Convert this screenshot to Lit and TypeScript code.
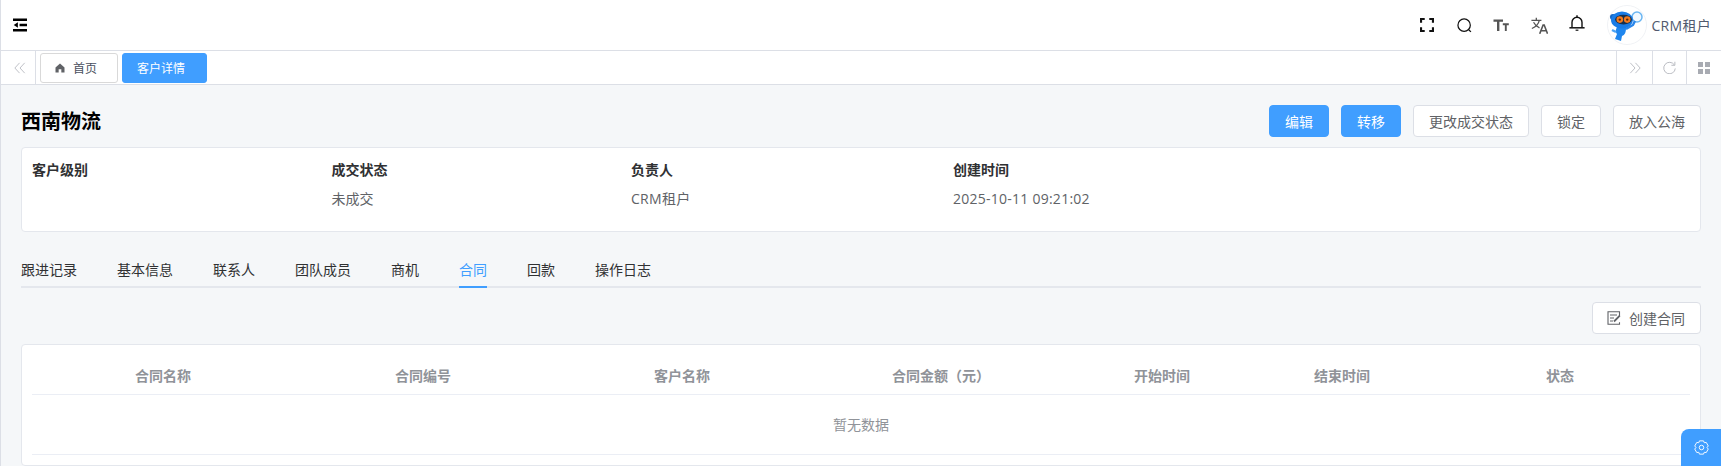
import { LitElement, css, html, svg } from 'lit';
import { customElement } from 'lit/decorators.js';

const tabs = ['跟进记录', '基本信息', '联系人', '团队成员', '商机', '合同', '回款', '操作日志'];
const columns = ['合同名称', '合同编号', '客户名称', '合同金额（元）', '开始时间', '结束时间', '状态'];

const icon = (size: number, body: unknown, box = '0 0 16 16') => html`
  <svg width=${size} height=${size} viewBox=${box} fill="none" stroke="currentColor" stroke-width="2">${body}</svg>
`;

const menuIcon = icon(14, svg`
  <path d="M0 2h16M7.5 8H16M0 14h16" stroke-width="2.6" />
  <path d="M5.6 4.8v6.4L.8 8z" fill="currentColor" stroke="none" />
`);

const fullscreenIcon = icon(14, svg`
  <path d="M1.2 5.4V1.2h4.2M10.6 1.2h4.2v4.2M14.8 10.6v4.2h-4.2M5.4 14.8H1.2v-4.2" stroke-width="2.4" />
`);

const searchIcon = icon(15, svg`
  <circle cx="7.6" cy="7.6" r="6.6" stroke-width="1.3" />
  <path d="M12.4 12.4l2.4 2.4" stroke-width="1.5" />
`);

const fontIcon = icon(16, svg`
  <path d="M.5 3.6h9.5M5.2 3.6v10.4" stroke-width="2.4" />
  <path d="M9.8 7.2h6M12.8 7.2v6.8" stroke-width="1.9" />
`);

const bellIcon = icon(16, svg`
  <path d="M3 12.6V7.2a5 5 0 0 1 10 0v5.4" stroke-width="1.4" />
  <path d="M.4 12.8h15.2" stroke-width="1.5" />
  <path d="M8 .2v2" stroke-width="1.4" />
  <path d="M6.6 15.2h2.8" stroke-width="1.2" />
`);

const translateIcon = icon(17, svg`
  <path d="M.4 3.2h9.4M5 .6v2.6M7.8 3.2c-.7 3.2-3 6-7 7.6M2.4 5c1.2 2.4 3.2 4.2 5.6 5.2" stroke-width="1.2" />
  <path d="M8.2 15.8l3.2-8.2h1l3.2 8.2M9.4 13h5.2" stroke-width="1.5" />
`);

const mascot = html`
  <svg width="40" height="40" viewBox="0 0 40 40">
    <circle cx="20" cy="20" r="19.5" fill="#fff" stroke="#f0f2f5" />
    <circle cx="30" cy="12" r="5" fill="#f2f9ff" stroke="#6bb6f2" stroke-width="1.5" />
    <path d="M19 24l7-4 2-4" stroke="#2a86ea" stroke-width="2.4" fill="none" />
    <path d="M10 22l9 1c0 4-1 7-4 8l-1 5-6-2 2-5c-2-2-1-5 0-7z" fill="#1f86ee" />
    <path d="M9 27l-4-2" stroke="#4aa3f5" stroke-width="2.4" />
    <circle cx="6" cy="12" r="3" fill="#1565c0" />
    <ellipse cx="15" cy="15" rx="11" ry="8.6" fill="#1a7ce6" />
    <ellipse cx="16.5" cy="14.6" rx="8.4" ry="4.8" fill="#17304f" />
    <circle cx="12.8" cy="14.6" r="3.3" fill="#f47b1f" />
    <circle cx="20.2" cy="14.6" r="3.3" fill="#f47b1f" />
    <circle cx="12.8" cy="14.6" r="1.2" fill="#5a2a0c" />
    <circle cx="20.2" cy="14.6" r="1.2" fill="#5a2a0c" />
  </svg>
`;

const homeIcon = html`
  <svg width="10" height="10" viewBox="0 0 12 12" fill="#606266">
    <path d="M6 .6L.6 5.4V11.4h3.8V7.6h3.2v3.8h3.8V5.4z" />
  </svg>
`;

const leftChevrons = icon(12, svg`
  <path d="M6.5 1L1 7l5.5 6M12.5 1L7 7l5.5 6" stroke-width="1" />
`, '0 0 14 14');

const rightChevrons = icon(12, svg`
  <path d="M1.5 1L7 7l-5.5 6M7.5 1L13 7l-5.5 6" stroke-width="1" />
`, '0 0 14 14');

const refreshIcon = icon(13, svg`
  <path d="M12.2 4.2A6.2 6.2 0 1 0 13.2 8" stroke-width="1" />
  <path d="M12.8 .8v3.8H9" stroke-width="1" />
`, '0 0 14 14');

const gridIcon = html`
  <svg width="12" height="12" viewBox="0 0 12 12" fill="#a8abb2">
    <rect width="5" height="5" />
    <rect x="7" width="5" height="5" />
    <rect y="7" width="5" height="5" />
    <rect x="7" y="7" width="5" height="5" />
  </svg>
`;

const createIcon = icon(14, svg`
  <path d="M12.5 5V.8H1v12.4h11.5v-2" stroke-width="1.1" />
  <path d="M3 4h7M3 7h4M3 10h3" stroke-width="1" />
  <path d="M7 10.5L12.8 4.6" stroke-width="1.8" />
`, '0 0 14 14');

// six-lobed gear outline
const gearOutline = (() => {
  const pts: string[] = [];
  for (let k = 0; k < 6; k++) {
    const a = k * 60 - 90;
    for (const [d, r] of [[-17, 7.4], [17, 7.4], [30, 5.9]]) {
      const t = ((a + d) * Math.PI) / 180;
      pts.push(`${(8 + r * Math.cos(t)).toFixed(2)} ${(8 + r * Math.sin(t)).toFixed(2)}`);
    }
  }
  return `M${pts.join('L')}z`;
})();

const gearIcon = icon(15, svg`
  <path d=${gearOutline} stroke-width="1" stroke-linejoin="round" />
  <circle cx="8" cy="8" r="2.4" stroke-width="1" />
`);

@customElement('app-root')
export class AppRoot extends LitElement {
  render() {
    return html`
      <div class="page">
        <header class="topbar">
          <span class="menu">${menuIcon}</span>
          <div class="tools">
            <span class="tool w37">${fullscreenIcon}</span>
            <span class="tool w37">${searchIcon}</span>
            <span class="tool w36 grey">${fontIcon}</span>
            <span class="tool w41 grey">${translateIcon}</span>
            <span class="tool w35 bell">${bellIcon}</span>
            <span class="user">${mascot}<span class="name">CRM租户</span></span>
          </div>
        </header>

        <nav class="tagbar">
          <span class="side first">${leftChevrons}</span>
          <div class="tags">
            <span class="tag">${homeIcon}<span>首页</span></span>
            <span class="tag active">客户详情</span>
          </div>
          <span class="side">${rightChevrons}</span>
          <span class="side mid">${refreshIcon}</span>
          <span class="side last">${gridIcon}</span>
        </nav>

        <main class="content">
          <div class="head">
            <h1>西南物流</h1>
            <div class="actions">
              <button class="primary">编辑</button>
              <button class="primary">转移</button>
              <button>更改成交状态</button>
              <button>锁定</button>
              <button>放入公海</button>
            </div>
          </div>

          <section class="info">
            <div><b>客户级别</b><span></span></div>
            <div><b>成交状态</b><span>未成交</span></div>
            <div><b>负责人</b><span class="name">CRM租户</span></div>
            <div><b>创建时间</b><span class="date">2025-10-11 09:21:02</span></div>
          </section>

          <div class="tabs">
            ${tabs.map((t) => html`<span class=${t === '合同' ? 'tab on' : 'tab'}>${t}</span>`)}
          </div>

          <div class="toolbar">
            <button class="create">${createIcon}<span>创建合同</span></button>
          </div>

          <section class="table">
            <div class="row header">
              ${columns.map((c) => html`<span>${c}</span>`)}
            </div>
            <div class="empty">暂无数据</div>
          </section>
        </main>

        <div class="settings">${gearIcon}</div>
      </div>
    `;
  }

  static styles = css`
    :host {
      display: block;
      font-family: 'Open Sans', 'Noto Sans CJK SC', sans-serif;
      font-size: 14px;
      color: #515a6e;
    }

    .page {
      position: relative;
      height: 466px;
      overflow: hidden;
      border-left: 1px solid #dcdfe6;
      background: #f5f7f9;
      box-sizing: border-box;
    }

    .topbar {
      height: 50px;
      display: flex;
      align-items: center;
      justify-content: space-between;
      padding-left: 12px;
      background: #fff;
      border-bottom: 1px solid #dcdfe6;
    }

    .menu {
      display: flex;
      color: #000;
    }

    .tools {
      display: flex;
      align-items: center;
      height: 100%;
    }

    .tool {
      display: flex;
      justify-content: center;
      color: #111;
    }

    .w35 {
      width: 35px;
    }

    .w36 {
      width: 36px;
    }

    .w37 {
      width: 37px;
    }

    .w41 {
      width: 41px;
    }

    .tool.grey {
      color: #555;
    }

    .tool.bell {
      margin-bottom: 4px;
    }

    .user {
      display: flex;
      align-items: center;
      gap: 4px;
      margin-left: 12.5px;
      padding-right: 10px;
    }

    .name {
      letter-spacing: 0.3px;
    }

    .tagbar {
      display: flex;
      align-items: stretch;
      height: 33px;
      background: #fff;
      border-bottom: 1px solid #dcdfe6;
    }

    .side {
      display: flex;
      align-items: center;
      justify-content: center;
      width: 36px;
      box-sizing: border-box;
      color: #b4b7bd;
      border-left: 1px solid #dcdfe6;
    }

    .side.mid {
      width: 34px;
    }

    .side.last {
      width: 35px;
    }

    .side.first {
      width: 35px;
      padding-left: 3px;
      border-left: 0;
      border-right: 1px solid #dcdfe6;
    }

    .tags {
      flex: 1;
      display: flex;
      gap: 4px;
      padding: 2px 0 1px 4px;
    }

    .tag {
      display: flex;
      align-items: center;
      gap: 8px;
      width: 78px;
      box-sizing: border-box;
      padding-left: 14px;
      border: 1px solid #d9d9d9;
      border-radius: 3px;
      font-size: 12px;
      color: #495060;
    }

    .tag.active {
      width: 85px;
      border-color: #409eff;
      background: #409eff;
      color: #fff;
    }

    .content {
      padding: 20px 20px 0;
    }

    .head {
      display: flex;
      align-items: center;
      justify-content: space-between;
      height: 32px;
      margin-bottom: 10px;
    }

    h1 {
      margin: 0 0 2px;
      font-size: 20px;
      font-weight: 700;
      color: #000;
    }

    .actions {
      display: flex;
      gap: 12px;
    }

    button {
      height: 32px;
      padding: 0 15px;
      border: 1px solid #dcdfe6;
      border-radius: 4px;
      background: #fff;
      color: #606266;
      font: inherit;
      font-size: 14px;
    }

    button.primary {
      border-color: #409eff;
      background: #409eff;
      color: #fff;
    }

    .info {
      display: grid;
      grid-template-columns: 299.5px 299.5px 322px 1fr;
      height: 85px;
      box-sizing: border-box;
      padding: 12px 10px;
      background: #fff;
      border: 1px solid #e4e7ed;
      border-radius: 4px;
    }

    .info div {
      display: flex;
      flex-direction: column;
      gap: 8px;
    }

    .info b {
      line-height: 20px;
      color: #303133;
    }

    .info span {
      line-height: 22px;
      color: #606266;
    }

    .info .date {
      letter-spacing: 0.25px;
    }

    .tabs {
      display: flex;
      gap: 40px;
      height: 41px;
      margin-top: 13px;
      border-bottom: 2px solid #e4e7ed;
    }

    .tab {
      height: 43px;
      padding-top: 7px;
      line-height: 36px;
      box-sizing: border-box;
      color: #303133;
    }

    .tab.on {
      color: #409eff;
      border-bottom: 2px solid #409eff;
    }

    .toolbar {
      display: flex;
      justify-content: flex-end;
      margin-top: 14px;
    }

    .create {
      display: flex;
      align-items: center;
      gap: 8px;
      padding: 0 15px 0 14px;
    }

    .table {
      margin-top: 10px;
      height: 122px;
      box-sizing: border-box;
      padding: 0 10px;
      background: #fff;
      border: 1px solid #e4e7ed;
      border-radius: 4px;
    }

    .row {
      display: grid;
      grid-template-columns: 262px 258px 260px 258px 184px 176px 1fr;
      height: 50px;
      box-sizing: border-box;
      padding-top: 11px;
      align-items: center;
      border-bottom: 1px solid #ebeef5;
      text-align: center;
      font-weight: 700;
      color: #909399;
    }

    .empty {
      height: 60px;
      line-height: 59px;
      box-sizing: border-box;
      text-align: center;
      color: #909399;
      border-bottom: 1px solid #ebeef5;
    }

    .settings {
      position: absolute;
      right: 0;
      bottom: 0;
      width: 40px;
      height: 37px;
      display: flex;
      align-items: center;
      justify-content: center;
      background: #409eff;
      color: #fff;
      border-top-left-radius: 8px;
    }
  `;
}
